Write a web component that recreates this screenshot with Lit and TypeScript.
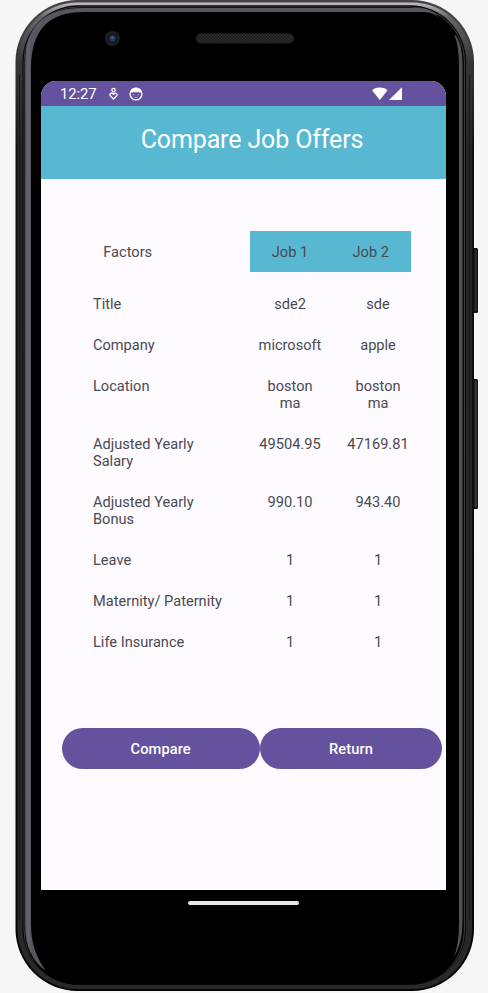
import { LitElement, html, svg, css } from "lit";
import { customElement, property } from "lit/decorators.js";

@customElement("phone-shell")
class PhoneShell extends LitElement {
  static styles = css`
    :host { position: absolute; inset: 0; z-index: 0; }
    svg { display: block; }
  `;
  render() {
    const ring = (l: number, t: number, r: number, b: number, q: number, fill: string) =>
      svg`<rect x=${l} y=${t} width=${r - l} height=${b - t} rx=${q} fill=${fill}/>`;
    return html`<svg width="488" height="993" viewBox="0 0 488 993">
      <defs>
        <linearGradient id="outer" x1="0" y1="0" x2="0" y2="1">
          <stop offset="0" stop-color="#454347"/><stop offset=".02" stop-color="#454545"/>
          <stop offset=".15" stop-color="#111"/><stop offset="1" stop-color="#050505"/>
        </linearGradient>
        <linearGradient id="band" x1="0" y1="0" x2="0" y2="1">
          <stop offset="0" stop-color="#c4bec3"/><stop offset=".004" stop-color="#aaa5a9"/><stop offset=".015" stop-color="#666468"/>
          <stop offset=".06" stop-color="#363637"/><stop offset=".15" stop-color="#252525"/>
          <stop offset="1" stop-color="#292929"/>
        </linearGradient>
        <linearGradient id="glass" gradientUnits="userSpaceOnUse" x1="25" y1="0" x2="31" y2="0"><stop offset="0" stop-color="#4b4c54"/><stop offset=".5" stop-color="#65666e"/><stop offset="1" stop-color="#56575f"/></linearGradient>
        <pattern id="mesh" width="3" height="3" patternUnits="userSpaceOnUse">
          <rect width="3" height="3" fill="#1b1b1b"/><circle cx="1" cy="1" r=".7" fill="#414141"/><circle cx="2.5" cy="2.5" r=".6" fill="#383838"/>
        </pattern>
      </defs>
      <rect x="471" y="248" width="7" height="65" rx="1.5" fill="#111"/>
      <rect x="474.5" y="250" width="2.5" height="61" fill="#292929"/>
      <rect x="471" y="379" width="7" height="130" rx="1.5" fill="#111"/>
      <rect x="474.5" y="381" width="2.5" height="126" fill="#353535"/>
      ${ring(15.5, 0, 474, 991, 62, "url(#outer)")}
      ${ring(17.5, 2.5, 472, 989, 60, "url(#band)")}
      <path d="M19.5 75V920M469.5 75V920" stroke="#171717" stroke-width="1"/>
      <rect x="22.5" y="5.3" width="443.5" height="979.5" rx="56" fill="#080808"/>
      <rect x="24" y="7" width="440.5" height="977" rx="54" fill="none" stroke="#47484c" stroke-width=".8"/>
      <rect x="25" y="7.8" width="438" height="977" rx="53" fill="#000"/>
      <path d="M31 68Q31 12 83 12H424Q433 12 439 18Q431 8 420 8H82Q25 8 25 63V925Q25 956 46 971Q31 951 31 925Z" fill="url(#glass)"/>
      <path d="M454 34Q462.5 41 462.5 66V923Q462.5 943 454 957Q459 944 459 923V66Q459 46 454 34Z" fill="#505056"/>
      <circle cx="112.5" cy="38.5" r="7.5" fill="#202022"/><circle cx="112.5" cy="38.5" r="5" fill="#11131b"/>
      <circle cx="112.5" cy="38.5" r="3.3" fill="#28345b"/><circle cx="112.3" cy="37.6" r="1.2" fill="#596b93"/>
      <rect x="196" y="33.5" width="98" height="10" rx="5" fill="url(#mesh)"/>
    </svg>`;
  }
}

@customElement("status-bar")
class StatusBar extends LitElement {
  static styles = css`
    :host { display: flex; align-items: center; height: 25px; box-sizing: border-box; background: #64529e; color: #fff; padding: 0 43px 0 19px; }
    .time { font-size: 14.8px; letter-spacing: -.1px; width: 48.5px; line-height: 26px; }
    svg { display: block; }
    .gap { width: 11.5px; }
    .fill { flex: 1; }
  `;
  render() {
    return html`<span class="time">12:27</span>
      <svg width="9" height="14" viewBox="0 0 9 14" fill="none" stroke="#fff" stroke-width="1.25">
        <circle cx="4.5" cy="3.1" r="1.7"/><path d="M4.5 12 1.2 8.7Q.4 7 2 6.2Q3.4 5.8 4.5 7.3Q5.6 5.8 7 6.2Q8.6 7 7.8 8.7Z"/>
      </svg>
      <span class="gap"></span>
      <svg width="14" height="14" viewBox="0 0 14 14">
        <circle cx="7" cy="7" r="5.9" fill="none" stroke="#fff" stroke-width="1.3"/>
        <path d="M1 5Q3 .7 7 .7T13 5Q10.8 6.2 10 5Q8.5 5.8 7 5Q5.2 5.8 4 5Q3 6.2 1 5Z" fill="#fff"/>
        <circle cx="4.7" cy="7.7" r=".5" fill="#fff"/><circle cx="9.3" cy="7.7" r=".5" fill="#fff"/>
        <path d="M5 10.1Q7 11 9 10.1" stroke="#fff" stroke-width=".4" fill="none"/>
      </svg>
      <span class="fill"></span>
      <svg width="31" height="14" viewBox="0 0 31 14" fill="#fff">
        <path d="M.2 3.5Q2 .4 7.8 .4T15.4 3.5L7.8 12.9Z"/><path d="M30 .2V13H17Z"/>
      </svg>`;
  }
}

interface Factor { name: string; one: string; two: string; }

@customElement("offer-table")
class OfferTable extends LitElement {
  @property({ attribute: false }) rows: Factor[] = [];
  static styles = css`
    :host { display: block; font-size: 14.6px; line-height: 17.4px; color: #4b4950; }
    .head { display: grid; grid-template-columns: 157px 81px 80.5px; grid-template-rows: 41px; padding-left: 51.5px; margin-bottom: 11.9px; line-height: 42px; }
    .factors { padding-left: 10.8px; }
    .job { background: #58b7d1; text-align: center; }
    .row { display: grid; grid-template-columns: 153px 88px 88px; padding: 12.2px 0 11.2px 52px; }
    .name { max-width: 136px; }
    .value { text-align: center; padding: 0 17px; }
    .wide { padding: 0; }
  `;
  render() {
    const cell = (v: string) => html`<span class="value ${v.includes(" ") ? "" : "wide"}">${v}</span>`;
    return html`<div class="head"><span class="factors">Factors</span><span class="job">Job 1</span><span class="job">Job 2</span></div>
      ${this.rows.map(r => html`<div class="row"><span class="name">${r.name}</span>${cell(r.one)}${cell(r.two)}</div>`)}`;
  }
}

@customElement("app-root")
class AppRoot extends LitElement {
  static styles = css`
    :host { display: block; position: relative; width: 488px; height: 993px; overflow: hidden; background: #f6f6f6; font-family: Roboto, sans-serif; }
    .content { position: relative; z-index: 1; padding: 81px 42px 0 41px; }
    .screen { height: 809px; background: #fdfbff; border-radius: 15px 15px 0 0; overflow: hidden; }
    .title { height: 73px; box-sizing: border-box; background: #58b7d1; color: #fff; margin: 0 0 52px; font-weight: 400; font-size: 25px; line-height: 68px; letter-spacing: -.13px; text-align: center; padding-left: 17px; }
    .actions { display: flex; margin: 65.7px 0 0 20.7px; }
    button { height: 41px; padding: 0; border: 0; border-radius: 21px; background: #64529e; color: #fff; font: 500 14.6px/42px Roboto, sans-serif; letter-spacing: .1px; }
    .compare { width: 198px; }
    .return { width: 182.5px; }
    .home { width: 111px; height: 4px; border-radius: 2px; margin: 11px auto 0; background: #e8e8e8; }
  `;
  private factors: Factor[] = [
    { name: "Title", one: "sde2", two: "sde" },
    { name: "Company", one: "microsoft", two: "apple" },
    { name: "Location", one: "boston ma", two: "boston ma" },
    { name: "Adjusted Yearly Salary", one: "49504.95", two: "47169.81" },
    { name: "Adjusted Yearly Bonus", one: "990.10", two: "943.40" },
    { name: "Leave", one: "1", two: "1" },
    { name: "Maternity/ Paternity", one: "1", two: "1" },
    { name: "Life Insurance", one: "1", two: "1" },
  ];
  render() {
    return html`<phone-shell></phone-shell>
      <div class="content">
        <main class="screen">
          <status-bar></status-bar>
          <h1 class="title">Compare Job Offers</h1>
          <offer-table .rows=${this.factors}></offer-table>
          <div class="actions"><button class="compare">Compare</button><button class="return">Return</button></div>
        </main>
        <div class="home"></div>
      </div>`;
  }
}
